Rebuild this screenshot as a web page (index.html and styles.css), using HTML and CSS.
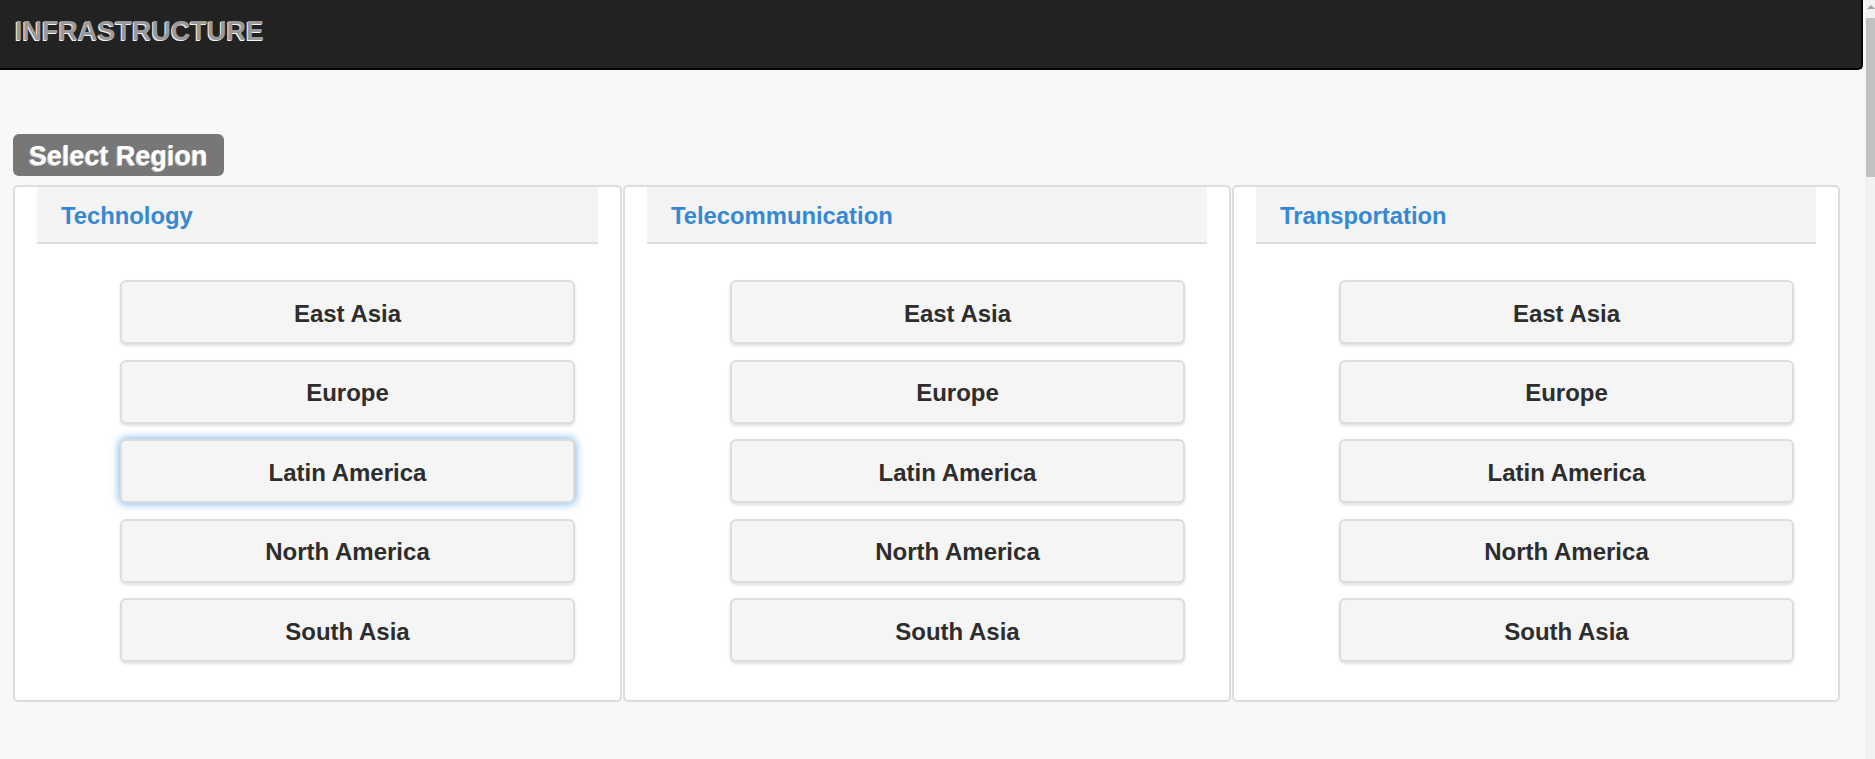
FILE: index.html
```html
<!DOCTYPE html>
<html lang="en">
<head>
<meta charset="utf-8">
<title>Infrastructure</title>
<link rel="stylesheet" href="styles.css">
</head>
<body>
<header class="navbar">
  <span class="brand">INFRASTRUCTURE</span>
</header>
<main class="content">
  <div class="badge">Select Region</div>
  <div class="panels">
    <section class="panel">
      <div class="panel-head">Technology</div>
      <div class="panel-body">
        <button class="region">East Asia</button>
        <button class="region">Europe</button>
        <button class="region focused">Latin America</button>
        <button class="region">North America</button>
        <button class="region">South Asia</button>
      </div>
    </section>
    <section class="panel">
      <div class="panel-head">Telecommunication</div>
      <div class="panel-body">
        <button class="region">East Asia</button>
        <button class="region">Europe</button>
        <button class="region">Latin America</button>
        <button class="region">North America</button>
        <button class="region">South Asia</button>
      </div>
    </section>
    <section class="panel">
      <div class="panel-head">Transportation</div>
      <div class="panel-body">
        <button class="region">East Asia</button>
        <button class="region">Europe</button>
        <button class="region">Latin America</button>
        <button class="region">North America</button>
        <button class="region">South Asia</button>
      </div>
    </section>
  </div>
</main>
<div class="scrollbar"><div class="scroll-arrow"></div><div class="scroll-thumb"></div></div>
</body>
</html>
```
FILE: styles.css
```css
html, body {
  margin: 0;
  padding: 0;
}
body {
  background: #f8f8f8;
  font-family: "Liberation Sans", Arial, sans-serif;
  width: 1875px;
  height: 759px;
  overflow: hidden;
}
.navbar {
  box-sizing: border-box;
  width: 1863px;
  height: 70px;
  background: #222;
  border-right: 2px solid #080808;
  border-bottom: 2px solid #080808;
  border-bottom-right-radius: 5px;
  display: flex;
  align-items: center;
  padding-left: 15px;
  padding-bottom: 5px;
}
.brand {
  font-size: 27px;
  font-weight: bold;
  color: #9a9a9a;
  text-shadow: -1px 1px 0 #f4f4f4;
}
.content {
  padding: 64px 0 0 13px;
}
.badge {
  display: inline-flex;
  align-items: center;
  box-sizing: border-box;
  height: 42px;
  padding: 2px 16px 0 16px;
  background: #777;
  border-radius: 6px;
  color: #fff;
  font-size: 27px;
  font-weight: bold;
  text-shadow: -1px 1px 0 rgba(255,255,255,0.6);
  margin-bottom: 9px;
}
.panels {
  display: grid;
  grid-template-columns: repeat(3, 609px);
  width: 1827px;
}
.panel {
  box-sizing: border-box;
  background: #fff;
  border: 2px solid #ddd;
  border-radius: 5px;
  padding: 0 22px 38px;
  height: 517px;
}
.panel + .panel {
  margin-left: 1px;
  width: 608px;
}
.panel-head {
  box-sizing: border-box;
  height: 57px;
  background: #f4f4f4;
  border-bottom: 2px solid #ddd;
  display: flex;
  align-items: center;
  padding: 2px 0 0 24px;
  font-size: 23.8px;
  font-weight: bold;
  color: #3688d5;
}
.panel-body {
  display: flex;
  flex-direction: column;
  gap: 15.5px;
  padding: 36px 0 0 83px;
}
.region {
  box-sizing: border-box;
  width: 455px;
  height: 64px;
  background: #f5f5f5;
  border: 2px solid #ddd;
  border-radius: 6px;
  box-shadow: 0 2px 3px rgba(0,0,0,0.12);
  font-family: "Liberation Sans", Arial, sans-serif;
  font-size: 24px;
  font-weight: bold;
  color: #2d2d2d;
  padding: 3px 0 0;
  cursor: pointer;
}
.region.focused {
  box-shadow: 0 0 9px 1px rgba(80,160,230,0.75);
}
.scrollbar {
  position: fixed;
  top: 0;
  right: 0;
  width: 10px;
  height: 759px;
  background: #f1f1f1;
}
.scroll-arrow {
  position: absolute;
  top: 5px;
  left: 2px;
  width: 0;
  height: 0;
  border-left: 4px solid transparent;
  border-right: 4px solid transparent;
  border-bottom: 4px solid #a3a3a3;
}
.scroll-thumb {
  position: absolute;
  top: 18px;
  left: 1px;
  width: 9px;
  height: 159px;
  background: #c1c1c1;
}
```
